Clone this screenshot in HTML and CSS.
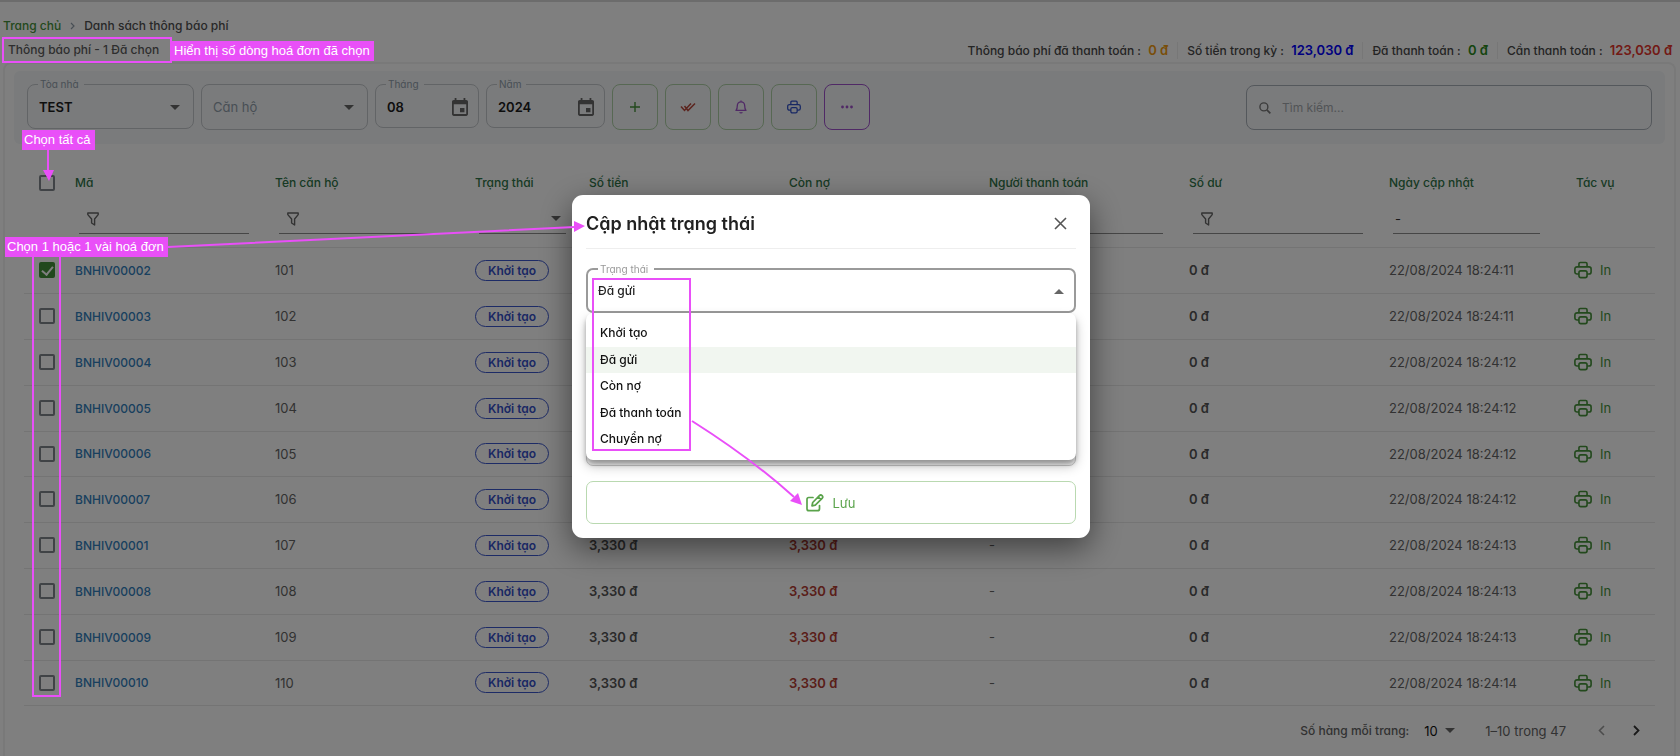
FILE: index.html
```html
<!DOCTYPE html>
<html lang="vi">
<head>
<meta charset="utf-8">
<title>Danh sách thông báo phí</title>
<link rel="stylesheet" href="styles.css">
</head>
<body>
<svg class="sprite" aria-hidden="true">
  <symbol id="i-print" viewBox="0 0 20 20"><g fill="none" stroke="currentColor" stroke-width="1.8" stroke-linejoin="round"><path d="M5.500 6.500V3.200c0-.9.6-1.500 1.500-1.500h6c.9 0 1.500.6 1.500 1.500v3.300"/><path d="M5.500 14.500H3.500c-1.500 0-2.500-.9-2.500-2.300V8.800c0-1.400 1-2.300 2.500-2.300h13c1.500 0 2.500.9 2.500 2.300v3.400c0 1.400-1 2.300-2.500 2.300h-2"/><rect x="5.500" y="11" width="9" height="7.500" rx="2"/></g></symbol>
  <symbol id="i-filter" viewBox="0 0 12 14"><path d="M.8 1h10.400v1.600L7.600 7v6L4.600 11V7L.8 2.600z" fill="none" stroke="currentColor" stroke-width="1.400" stroke-linejoin="round"/></symbol>
  <symbol id="i-cal" viewBox="0 0 18 20"><path d="M16 2h-1V0h-2v2H5V0H3v2H2C.9 2 0 2.900 0 4v14c0 1.100.9 2 2 2h14c1.100 0 2-.9 2-2V4c0-1.100-.9-2-2-2zm0 16H2V7h14v11zM14 11H9v5h5z" fill="currentColor"/></symbol>
</svg>

<div class="page">
  <nav class="crumbs" aria-label="Breadcrumb">
    <a href="#">Trang chủ</a>
    <svg width="5" height="8" viewBox="0 0 5 8"><path d="M1 1l3 3-3 3" fill="none" stroke="#919eab" stroke-width="1.200"/></svg>
    <span>Danh sách thông báo phí</span>
  </nav>
  <div class="summary">
    <span class="summary-title">Thông báo phí - 1 Đã chọn</span>
    <ul class="totals">
      <li>Thông báo phí đã thanh toán : <b class="orange">0 đ</b></li>
      <li>Số tiền trong kỳ : <b class="blue">123,030 đ</b></li>
      <li>Đã thanh toán : <b class="green">0 đ</b></li>
      <li>Cần thanh toán : <b class="red">123,030 đ</b></li>
    </ul>
  </div>

  <main class="card">
    <div class="toolbar">
      <fieldset class="field w-select"><legend>Tòa nhà</legend>
        <select class="strong" aria-label="Tòa nhà"><option>TEST</option></select><i class="caret"></i></fieldset>
      <div class="field w-select plain">
        <select class="muted" aria-label="Căn hộ"><option>Căn hộ</option></select><i class="caret"></i></div>
      <fieldset class="field w-month short"><legend>Tháng</legend>
        <input class="strong" aria-label="Tháng" value="08"><svg class="cal"><use href="#i-cal"/></svg></fieldset>
      <fieldset class="field w-year short"><legend>Năm</legend>
        <input class="strong" aria-label="Năm" value="2024"><svg class="cal"><use href="#i-cal"/></svg></fieldset>
      <button class="tool c-green" aria-label="Thêm"><svg width="12" height="12" viewBox="0 0 12 12"><path d="M6 1v10M1 6h10" stroke="currentColor" stroke-width="1.400"/></svg></button>
      <button class="tool c-red" aria-label="Xác nhận"><svg width="16" height="10" viewBox="0 0 16 10"><path d="M1 4.500l3.500 4L11 1.500M4.500 4l3.500 4.500L15 1.500" fill="none" stroke="currentColor" stroke-width="1.500"/></svg></button>
      <button class="tool c-purple" aria-label="Thông báo"><svg width="12" height="14" viewBox="0 0 12 14"><path d="M1 10.400c1-.9 1.300-2 1.300-4.600C2.300 3.400 3.800 1.800 6 1.800s3.700 1.600 3.700 4c0 2.600.3 3.700 1.300 4.600zM6 .4v1.400M4.600 12.300c.6.700 2.200.7 2.800 0" fill="none" stroke="currentColor" stroke-width="1.300" stroke-linejoin="round"/></svg></button>
      <button class="tool c-blue" aria-label="In"><svg width="14" height="14"><use href="#i-print"/></svg></button>
      <button class="tool c-violet" aria-label="Thêm nữa"><svg width="12" height="4" viewBox="0 0 12 4"><path d="M1.500 2h.01M6 2h.01M10.500 2h.01" stroke="currentColor" stroke-width="2.800" stroke-linecap="round"/></svg></button>
      <label class="search"><svg width="12" height="12" viewBox="0 0 13 13"><circle cx="5.300" cy="5.300" r="4.300" fill="none" stroke="currentColor" stroke-width="1.500"/><path d="M8.500 8.500l3.800 3.800" stroke="currentColor" stroke-width="1.800"/></svg>
        <input placeholder="Tìm kiếm..." aria-label="Tìm kiếm"></label>
    </div>

    <table class="grid">
      <colgroup><col class="k-check"><col class="k-wide"><col class="k-wide"><col class="k-status"><col class="k-wide"><col class="k-wide"><col class="k-wide"><col class="k-wide"><col class="k-date"><col class="k-act"></colgroup>
      <thead>
        <tr class="names">
          <th><input type="checkbox" aria-label="Chọn tất cả"></th><th>Mã</th><th>Tên căn hộ</th><th>Trạng thái</th><th>Số tiền</th><th>Còn nợ</th><th>Người thanh toán</th><th>Số dư</th><th>Ngày cập nhật</th><th>Tác vụ</th>
        </tr>
        <tr class="filters">
          <td></td>
          <td><div class="filter"><svg><use href="#i-filter"/></svg></div></td>
          <td><div class="filter"><svg><use href="#i-filter"/></svg></div></td>
          <td><div class="filter end"><i class="caret"></i></div></td>
          <td><div class="filter"><svg><use href="#i-filter"/></svg></div></td>
          <td><div class="filter"><svg><use href="#i-filter"/></svg></div></td>
          <td><div class="filter"><svg><use href="#i-filter"/></svg></div></td>
          <td><div class="filter"><svg><use href="#i-filter"/></svg></div></td>
          <td><div class="filter date">-</div></td>
          <td></td>
        </tr>
      </thead>
      <tbody id="rows"></tbody>
    </table>

    <footer class="pager">
      <span>Số hàng mỗi trang:</span>
      <span class="size"><select aria-label="Số hàng mỗi trang"><option>10</option></select><i class="caret"></i></span>
      <span class="range">1–10 trong 47</span>
      <button class="nav off" aria-label="Trang trước"><svg width="7" height="11" viewBox="0 0 7 11"><path d="M6 1L1.500 5.500 6 10" fill="none" stroke="currentColor" stroke-width="1.600"/></svg></button>
      <button class="nav" aria-label="Trang sau"><svg width="7" height="11" viewBox="0 0 7 11"><path d="M1 1l4.500 4.500L1 10" fill="none" stroke="currentColor" stroke-width="1.800"/></svg></button>
    </footer>
  </main>
</div>

<div class="backdrop">
  <section class="dialog" role="dialog" aria-labelledby="dlg-title">
    <header class="dialog-head">
      <h2 id="dlg-title">Cập nhật trạng thái</h2>
      <button class="close" aria-label="Đóng"><svg width="13" height="13" viewBox="0 0 13 13"><path d="M1 1l11 11M12 1L1 12" stroke="currentColor" stroke-width="1.600"/></svg></button>
    </header>
    <div class="status-wrap">
      <fieldset class="status-field"><legend>Trạng thái</legend>
        <input aria-label="Trạng thái" value="Đã gửi"><i class="caret up"></i></fieldset>
      <ul class="menu" role="listbox">
        <li role="option">Khởi tạo</li>
        <li role="option" class="on" aria-selected="true">Đã gửi</li>
        <li role="option">Còn nợ</li>
        <li role="option">Đã thanh toán</li>
        <li role="option">Chuyển nợ</li>
      </ul>
    </div>
    <textarea class="note" aria-label="Ghi chú"></textarea>
    <button class="save"><svg width="18" height="18" viewBox="0 0 18 18"><g fill="none" stroke="currentColor" stroke-width="1.700" stroke-linejoin="round"><path d="M7 3.500H2.800C1.700 3.500 1 4.200 1 5.300v9.400c0 1.300.8 2 2 2h8.500c1.300 0 2-.8 2-2v-3.200" stroke-linecap="round"/><path d="M6 11.800l.7-3.300 6.700-6.800c.8-.8 1.900-.8 2.700 0 .8.8.8 1.900 0 2.700l-6.800 6.700zM12.300 3l2.700 2.700"/></g></svg>Lưu</button>
  </section>
</div>

<div class="notes">
  <svg class="marks" width="1680" height="756" viewBox="0 0 1680 756">
    <g fill="none" stroke="#e94ff8" stroke-width="2">
      <rect x="3" y="38" width="168" height="24"/>
      <rect x="33" y="250" width="27" height="446"/>
      <rect x="593" y="279" width="97" height="171"/>
      <path d="M48 148v24M168 247L575 227M692 421Q752 459 794 497"/>
    </g>
    <g fill="#e94ff8"><path d="M43 170h11l-5 11zM574 221l11 5-11 6zM798 493l4 12-12-4z"/></g>
  </svg>
  <span class="tag t1">Hiển thị số dòng hoá đơn đã chọn</span>
  <span class="tag t2">Chọn tất cả</span>
  <span class="tag t3">Chọn 1 hoặc 1 vài hoá đơn</span>
</div>
<script src="rows.js"></script>
</body>
</html>
```
FILE: rows.js
```js
const rows = [
  ["BNHIV00002", "101", "11"], ["BNHIV00003", "102", "11"], ["BNHIV00004", "103", "12"],
  ["BNHIV00005", "104", "12"], ["BNHIV00006", "105", "12"], ["BNHIV00007", "106", "12"],
  ["BNHIV00001", "107", "13"], ["BNHIV00008", "108", "13"], ["BNHIV00009", "109", "13"],
  ["BNHIV00010", "110", "14"]
];
document.getElementById("rows").innerHTML = rows.map(([code, flat, sec], i) => `
<tr>
  <td><input type="checkbox" aria-label="Chọn ${code}"${i === 0 ? " checked" : ""}></td>
  <td><a class="code" href="#">${code}</a></td>
  <td>${flat}</td>
  <td><span class="chip">Khởi tạo</span></td>
  <td class="money">3,330 đ</td>
  <td class="money debt">3,330 đ</td>
  <td>-</td>
  <td class="money">0 đ</td>
  <td>22/08/2024 18:24:${sec}</td>
  <td><button class="print"><svg width="18" height="20"><use href="#i-print"/></svg>In</button></td>
</tr>`).join("");
```
FILE: styles.css
```css
* { box-sizing: border-box; }
body { margin: 0; background: #fff; color: #637381; font: 400 13px/20px Inter, "Noto Sans", sans-serif; font-feature-settings: "cv11"; overflow: hidden; }
button, input, select, textarea { font: inherit; font-feature-settings: inherit; color: inherit; background: none; border: 0; padding: 0; margin: 0; outline: 0; appearance: none; }
ul { list-style: none; margin: 0; padding: 0; }
a { text-decoration: none; }
.sprite { display: none; }
.page { min-height: 100vh; border-top: 2px solid #d8d8d8; padding: 14px 4px 0 3px; display: flex; flex-direction: column; }
.crumbs, .summary, .status-field, .menu { font-size: 12px; font-weight: 500; }
.crumbs { display: flex; align-items: center; gap: 9px; color: #505050; }
.crumbs a { color: #46923a; }
.summary { display: flex; justify-content: space-between; align-items: center; height: 26px; padding: 2px 0 0 5px; color: #5c5c5c; }
.totals { display: flex; }
.totals li { padding: 0 9px; line-height: 16px; border-left: 1px solid #eee; color: #484848; }
.totals li:first-child { border: 0; }
.totals li:last-child { padding-right: 4px; }
b { font-size: 13px; font-weight: 600; margin-left: 4px; }
.orange { color: #f39c12; } .blue { color: #00f; } .green { color: #2b8a1c; } .red { color: #e5342b; }

.card { flex: 1; border: 2px solid #f2f2f2; border-bottom: 0; border-radius: 8px 8px 0 0; padding: 7px 9px 0; }
.toolbar { display: flex; gap: 7px; align-items: flex-start; height: 73px; padding: 7px 13px 0; background: #f4f6f8; border-radius: 6px; }
.field { position: relative; display: flex; align-items: center; height: 51px; min-width: 0; margin: 0; padding: 0 12px 4px 10px; border: 1px solid #c4c8cc; border-radius: 8px; }
.field.short { height: 50px; }
.field.plain { height: 46px; margin-top: 6px; padding-bottom: 0; }
legend { font-size: 10px; font-weight: 400; line-height: 12px; padding: 0 5px 0 2px; color: #919eab; }
.w-select { width: 167px; } .w-month { width: 104px; } .w-year { width: 119px; }
.field select, .field input { flex: 1; min-width: 0; width: 100%; height: 32px; padding-left: 1px; }
.field .caret { position: absolute; right: 13px; }
.strong { color: #1c1c1c; font-weight: 600; }
.muted { color: #919eab; }
.cal { position: absolute; right: 10px; width: 16px; height: 18px; color: #666; }
.caret { border: 5px solid transparent; border-top-color: #666; border-bottom: 0; }
.caret.up { border-top: 0; border-bottom: 5px solid #666; }
.tool { display: grid; place-items: center; flex: none; width: 46px; height: 46px; margin-top: 6px; border: 1px solid #aed0a6; border-radius: 8px; }
.c-green { color: #46923a; } .c-red { color: #b8483c; } .c-purple { color: #a052cc; } .c-blue { color: #2f50c8; } .c-violet { color: #a052cc; border-color: #a052cc; }
.search { display: flex; align-items: center; gap: 11px; width: 406px; height: 45px; margin: 7px 0 0 auto; padding: 0 12px; border: 1px solid #a9b0b8; border-radius: 8px; color: #777; }
.search input { flex: 1; font-size: 12px; } .search input::placeholder { color: #a4a9ae; opacity: 1; }

.grid { width: calc(100% - 20px); margin: 0 10px; table-layout: fixed; border-collapse: collapse; }
.k-check { width: 43px; } .k-wide { width: 200px; } .k-status { width: 114px; } .k-date { width: 187px; } .k-act { width: 87px; }
th, td { text-align: left; padding: 0 8px; white-space: nowrap; }
th { color: #2f7448; height: 60px; padding-top: 18px; font-weight: 500; font-size: 12px; }
.filters td { height: 43px; vertical-align: top; }
.filters td:nth-child(n) { padding: 0 18px 0 12px; }
.filters, tbody tr { border-bottom: 1px solid #e8e8e8; }
.filter { display: flex; align-items: center; height: 30px; padding-left: 8px; border-bottom: 1px solid #8d8d8d; color: #666; }
.filter svg { width: 12px; height: 14px; }
.filter.end { justify-content: flex-end; padding: 0 5px; margin-right: -3px; }
.filter.date { padding-left: 2px; margin-right: 10px; color: #333; }
tbody td { height: 46px; color: #646464; }
tbody tr:nth-child(5n) td { height: 45px; }
td:first-child, th:first-child { padding-left: 15px; padding-right: 0; }
input[type=checkbox] { display: block; width: 16px; height: 16px; border: 2px solid #80868c; border-radius: 2px; }
input[type=checkbox]:checked { border: 0; background: #43913a; position: relative; }
input[type=checkbox]:checked::after { content: ""; position: absolute; left: 5px; top: 2px; width: 5px; height: 9px; border: solid #fff; border-width: 0 2px 2px 0; transform: rotate(40deg); }
.code { color: #3280bc; font-size: 12px; font-weight: 500; }
.chip { display: inline-block; height: 21px; padding: 0 12px; border: 1px solid #3a56cc; border-radius: 11px; color: #3450c8; font-weight: 600; font-size: 12px; line-height: 19px; }
tbody .money { color: #545454; font-weight: 600; }
tbody .debt { color: #b43c32; }
.print { display: flex; align-items: center; gap: 8px; color: #46923a; margin-left: -2px; }
.pager { display: flex; justify-content: flex-end; align-items: center; height: 50px; padding-right: 25px; color: #646464; }
.pager > span:first-child { font-size: 12px; font-weight: 500; }
.size { display: flex; align-items: center; gap: 7px; margin-left: 15px; color: #111; }
.range { margin: 0 32px 0 30px; }
.nav { display: grid; color: #333; margin-left: 28px; } .nav.off { color: #999; margin-left: 0; }

.backdrop { position: fixed; inset: 0; display: flex; align-items: center; justify-content: center; padding: 0 18px 23px 0; background: rgba(0, 0, 0, .5); }
.dialog { width: 518px; padding: 14px; background: #fff; border-radius: 11px; box-shadow: 0 10px 32px rgba(0, 0, 0, .5); display: flex; flex-direction: column; }
.dialog-head { display: flex; justify-content: space-between; align-items: center; height: 40px; padding: 0 9px 10px 0; border-bottom: 1px solid #eee; }
h2 { margin: 0; font-size: 18px; line-height: 28px; font-weight: 600; color: #212121; }
.close { display: grid; color: #555; }
.status-wrap { position: relative; margin-top: 14px; }
.status-field { display: flex; align-items: center; height: 50px; margin: 0; padding: 0 10px 4px; border: 2px solid #9a9a9a; border-radius: 7px; }
.status-field legend { color: #999; padding: 0 6px 0 2px; }
.status-field input { flex: 1; color: #222; }
.menu { position: absolute; top: 50px; left: 0; right: 0; z-index: 1; display: flex; flex-direction: column; justify-content: space-between; height: 147px; padding: 7px 0 8px; background: #fff; border-radius: 7px; box-shadow: 0 4px 4px rgba(0, 0, 0, .25), 0 6px 12px rgba(0, 0, 0, .25); color: #111; }
.menu li { height: 26px; padding: 0 14px; line-height: 26px; }
.menu .on { background: #f1f6f0; }
.note { height: 140px; margin: 13px 0 15px; border: 1px solid #ccc; border-radius: 7px; resize: none; }
.save { display: flex; align-items: center; justify-content: center; gap: 8px; height: 43px; border: 1px solid #b9d9b0; border-radius: 7px; color: #5aa34b; }

.notes { position: absolute; inset: 0; pointer-events: none; }
.marks { position: absolute; top: 0; left: 0; }
.tag { position: absolute; padding: 0 4px 0 2px; background: #e94ff8; color: #fff; font: 13px/20px "Liberation Sans", Arial, sans-serif; white-space: nowrap; }
.t1 { left: 172px; top: 41px; } .t2 { left: 22px; top: 130px; } .t3 { left: 5px; top: 237px; }
```
